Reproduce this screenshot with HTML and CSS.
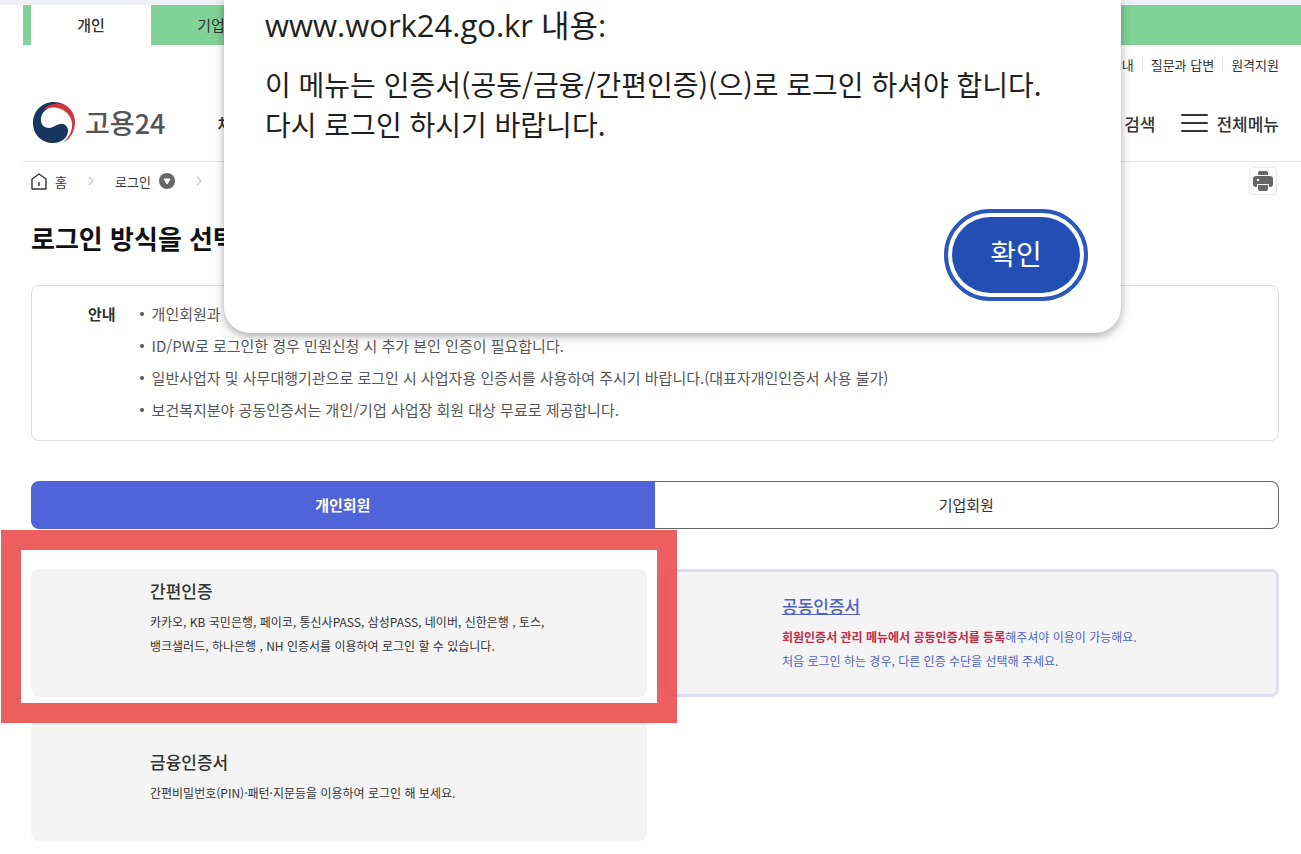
FILE: index.html
```html
<!DOCTYPE html>
<html lang="ko">
<head>
    <meta charset="UTF-8">
    <meta name="viewport" content="width=device-width, initial-scale=1.0">
    <title>고용24 로그인</title>
    <link rel="stylesheet" href="styles.css">
</head>
<body>

<div class="page">
    <nav class="top-tabs">
        <a class="top-tab active" href="#">개인</a>
        <a class="top-tab" href="#">기업</a>
    </nav>

    <header>
        <ul class="util-menu">
            <li><a href="#">안내</a></li>
            <li><a href="#">질문과 답변</a></li>
            <li><a href="#">원격지원</a></li>
        </ul>
        <div class="header-main">
            <a class="logo" href="#">
                <svg width="42" height="42" viewBox="0 0 42 42" aria-hidden="true">
                    <path fill="#17365f" d="M32 3C28 1 25 0 21 0 9 0 0 9 0 21s9 20 20 20c9 0 15-6 15-12 0-5-4-8-8-7-5 1-7 4-11 4-5 0-9-4-8-10C9 9 16 4 24 4z"/>
                    <path fill="#cf3540" d="M10 8C15 2 25 0 32 3c6 3 10 10 10 17 0 9-4 16-12 21 6-6 10-13 9-20C38 9 23 1 10 8z"/>
                </svg>
                <span>고용24</span>
            </a>
            <a class="gnb-item" href="#">채용</a>
            <div class="header-tools">
                <button class="tool-btn" type="button">검색</button>
                <button class="tool-btn" type="button">
                    <svg width="27" height="20" viewBox="0 0 27 20" stroke="#333" stroke-width="2" stroke-linecap="round" aria-hidden="true">
                        <path d="M1 2h25M1 10h25M1 18h25"/>
                    </svg>
                    전체메뉴
                </button>
            </div>
        </div>
    </header>

    <main>
        <div class="breadcrumb">
            <a class="home" href="#">
                <svg width="16" height="17" viewBox="0 0 16 17" fill="none" stroke="#333" aria-hidden="true">
                    <path stroke-width="1.4" stroke-linejoin="round" d="M1 6l7-5 7 5v10H1z"/>
                    <path stroke-width="1.4" d="M8 9v4"/>
                </svg>
                홈
            </a>
            <svg class="arrow" width="6" height="10" viewBox="0 0 6 10" fill="none" stroke="#ccc" stroke-width="1.4" aria-hidden="true"><path d="M1 1l4 4-4 4"/></svg>
            <a class="current" href="#">
                로그인
                <svg width="16" height="16" viewBox="0 0 16 16" aria-hidden="true">
                    <circle cx="8" cy="8" r="8" fill="#666"/>
                    <path fill="#fff" stroke="#fff" stroke-linejoin="round" d="M5 6h6l-3 5z"/>
                </svg>
            </a>
            <svg class="arrow" width="6" height="10" viewBox="0 0 6 10" fill="none" stroke="#ccc" stroke-width="1.4" aria-hidden="true"><path d="M1 1l4 4-4 4"/></svg>
            <button class="print-btn" type="button" aria-label="인쇄">
                <svg width="20" height="20" viewBox="0 0 20 20" fill="#666" aria-hidden="true">
                    <path d="M5 4V2q0-2 2-2h6q2 0 2 2v2z"/>
                    <path d="M3 5h14q3 0 3 3v5q0 3-3 3h-1v-3H4v3H3q-3 0-3-3V8q0-3 3-3z"/>
                    <path d="M5 14h10v4q0 2-2 2H7q-2 0-2-2z"/>
                    <path fill="#fff" d="M4 8h2v2H4z"/>
                </svg>
            </button>
        </div>

        <h1>로그인 방식을 선택</h1>

        <section class="notice">
            <strong>안내</strong>
            <ul>
                <li>개인회원과</li>
                <li>ID/PW로 로그인한 경우 민원신청 시 추가 본인 인증이 필요합니다.</li>
                <li>일반사업자 및 사무대행기관으로 로그인 시 사업자용 인증서를 사용하여 주시기 바랍니다.(대표자개인인증서 사용 불가)</li>
                <li>보건복지분야 공동인증서는 개인/기업 사업장 회원 대상 무료로 제공합니다.</li>
            </ul>
        </section>

        <div class="member-tabs">
            <button class="member-tab active" type="button">개인회원</button>
            <button class="member-tab" type="button">기업회원</button>
        </div>

        <div class="cards">
            <section class="card marked">
                <h2><a href="#">간편인증</a></h2>
                <p>카카오, KB 국민은행, 페이코, 통신사PASS, 삼성PASS, 네이버, 신한은행 , 토스,<br>뱅크샐러드, 하나은행 , NH 인증서를 이용하여 로그인 할 수 있습니다.</p>
            </section>
            <section class="card selected">
                <h2><a href="#">공동인증서</a></h2>
                <p><strong>회원인증서 관리 메뉴에서 공동인증서를 등록</strong>해주셔야 이용이 가능해요.<br>처음 로그인 하는 경우, 다른 인증 수단을 선택해 주세요.</p>
            </section>
            <section class="card">
                <h2><a href="#">금융인증서</a></h2>
                <p>간편비밀번호(PIN)·패턴·지문등을 이용하여 로그인 해 보세요.</p>
            </section>
        </div>
    </main>
</div>

<!-- 알림창 -->
<div class="alert" role="alertdialog" aria-labelledby="alert-title">
    <h2 id="alert-title">www.work24.go.kr 내용:</h2>
    <p>이 메뉴는 인증서(공동/금융/간편인증)(으)로 로그인 하셔야 합니다.<br>다시 로그인 하시기 바랍니다.</p>
    <button class="alert-ok" type="button">확인</button>
</div>

</body>
</html>
```
FILE: styles.css
```css
* {
    box-sizing: border-box;
}
body {
    margin: 0;
    background: #fff;
    border-top: 5px solid #eef1f6;
    font-family: "Noto Sans CJK KR", sans-serif;
    font-size: 15px;
    color: #333;
}
a {
    color: inherit;
    text-decoration: none;
}
button {
    font-family: inherit;
    cursor: pointer;
}
h1, h2, p, ul {
    margin: 0;
    padding: 0;
}
ul {
    list-style: none;
}
.page {
    margin-left: 23px;
}
.top-tabs {
    display: flex;
    height: 40px;
    padding-left: 8px;
    background: #81d296;
}
.top-tab {
    width: 120px;
    line-height: 40px;
    text-align: center;
}
.top-tab.active {
    background: #fff;
    font-weight: 500;
}
header {
    padding: 10px 22px 0 10px;
    border-bottom: 1px solid #e4e4e4;
}
.util-menu {
    display: flex;
    justify-content: flex-end;
    align-items: center;
    height: 20px;
    font-size: 13px;
}
.util-menu li {
    line-height: 14px;
    padding: 0 8px;
}
.util-menu li + li {
    border-left: 1px solid #e4e4e4;
}
.util-menu li:last-child {
    padding-right: 0;
}
.header-main {
    display: flex;
    align-items: center;
    height: 86px;
    padding-top: 10px;
}
.logo {
    display: flex;
    align-items: center;
    gap: 10px;
    font-size: 27px;
    font-weight: 500;
    line-height: 40px;
    color: #555;
}
.gnb-item {
    margin-left: 52px;
    font-size: 17px;
    font-weight: 500;
}
.header-tools {
    display: flex;
    gap: 26px;
    margin-left: auto;
}
.tool-btn {
    display: flex;
    align-items: center;
    gap: 8px;
    padding: 0;
    border: none;
    background: none;
    font-size: 17px;
    font-weight: 500;
    color: #333;
}
main {
    padding: 0 22px 13px 8px;
}
.breadcrumb {
    display: flex;
    align-items: center;
    height: 38px;
    font-size: 13px;
}
.breadcrumb a {
    display: flex;
    align-items: center;
    gap: 8px;
}
.arrow {
    margin: 0 21px;
}
.print-btn {
    display: flex;
    align-items: center;
    justify-content: center;
    width: 28px;
    height: 28px;
    margin: 0 2px 0 auto;
    padding: 0;
    border: 1px solid #e8e8e8;
    border-radius: 4px;
    background: #fff;
}
h1 {
    margin-top: 18px;
    font-size: 26px;
    font-weight: 700;
    line-height: 40px;
    color: #111;
}
.notice {
    display: flex;
    gap: 24px;
    margin-top: 27px;
    padding: 12px 56px 14px;
    border: 1px solid #ddd;
    border-radius: 8px;
    line-height: 32px;
}
.notice strong {
    font-weight: 700;
}
.notice li {
    display: flex;
    align-items: center;
    gap: 8px;
    color: #555;
}
.notice li::before {
    content: "";
    width: 4px;
    height: 4px;
    border-radius: 50%;
    background: #555;
}
.member-tabs {
    display: flex;
    margin-top: 40px;
}
.member-tab {
    flex: 1;
    height: 48px;
    padding: 0 0 2px;
    border: 1px solid #666;
    border-left: none;
    border-radius: 0 8px 8px 0;
    background: #fff;
    font-size: 15px;
    color: #333;
}
.member-tab.active {
    border: none;
    border-radius: 8px 0 0 8px;
    background: #5063d9;
    font-weight: 700;
    color: #fff;
}
.cards {
    display: grid;
    grid-template-columns: 1fr 1fr;
    gap: 16px;
    margin-top: 40px;
}
.card {
    position: relative;
    display: flex;
    flex-direction: column;
    justify-content: center;
    min-height: 128px;
    padding: 0 0 2px 119px;
    border-radius: 8px;
    background: #f4f4f4;
}
.card h2 {
    margin-bottom: 4px;
    font-size: 17px;
    font-weight: 500;
    line-height: 30px;
}
.card p {
    font-size: 12px;
    line-height: 24px;
}
.card.selected {
    padding-left: 116px;
    border: 3px solid #dddfee;
    color: #5063c4;
}
.card.selected h2 a {
    text-decoration: underline;
}
.card.selected strong {
    font-weight: 700;
    color: #c22a48;
}
/* 간편인증 강조 테두리 */
.card.marked {
    padding-bottom: 32px;
}
.card.marked::after {
    content: "";
    position: absolute;
    z-index: 1;
    top: -39px;
    right: -30px;
    bottom: -26px;
    left: -30px;
    border: 20px solid rgba(235, 83, 83, 0.93);
    pointer-events: none;
}
.alert {
    position: absolute;
    z-index: 10;
    top: 0;
    right: 180px;
    left: 224px;
    padding: 3px 41px 40px;
    border-radius: 0 0 26px 26px;
    background: #fff;
    box-shadow: 0 3px 10px rgba(0, 0, 0, 0.35);
    color: #1f1f1f;
}
.alert h2 {
    font-family: "Open Sans", "Noto Sans CJK KR", sans-serif;
    font-size: 31px;
    font-weight: 400;
    line-height: 44px;
}
.alert p {
    margin-top: 17px;
    font-size: 28px;
    line-height: 40px;
}
.alert-ok {
    display: block;
    width: 128px;
    height: 76px;
    margin: 73px 0 0 auto;
    padding: 0 0 4px;
    border: none;
    border-radius: 38px;
    outline: 4px solid #2a58bd;
    outline-offset: 4px;
    background: #234fb5;
    font-size: 28px;
    color: #fff;
}
```
